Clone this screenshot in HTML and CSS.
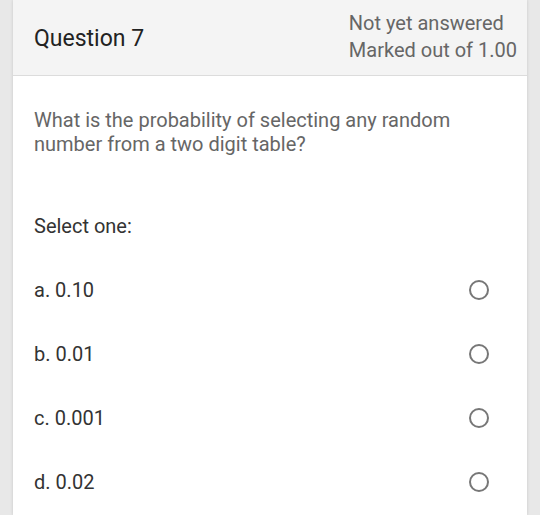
FILE: index.html
```html
<!DOCTYPE html>
<html>
<head>
<meta charset="utf-8">
<link rel="stylesheet" href="styles.css">
</head>
<body>
<div class="card">
  <div class="head">
    <div class="qno">Question 7</div>
    <div class="state">
      <div>Not yet answered</div>
      <div>Marked out of 1.00</div>
    </div>
  </div>
  <div class="body">
    <div class="qtext">What is the probability of selecting any random number from a two digit table?</div>
    <div class="prompt">Select one:</div>
    <div class="answers">
      <div class="opt"><span>a. 0.10</span><span class="radio"></span></div>
      <div class="opt"><span>b. 0.01</span><span class="radio"></span></div>
      <div class="opt"><span>c. 0.001</span><span class="radio"></span></div>
      <div class="opt"><span>d. 0.02</span><span class="radio"></span></div>
    </div>
  </div>
</div>
</body>
</html>
```
FILE: styles.css
```css
html, body { margin: 0; padding: 0; }
body {
  background: #e8e8e8;
  font-family: Roboto, "Noto Sans", sans-serif;
  height: 515px;
  overflow: hidden;
}
.card {
  margin: 0 13px 0 13px;
  background: #fff;
  min-height: 515px;
  box-shadow: 0 0 3px rgba(0,0,0,0.15);
}
.head {
  background: #f4f4f4;
  height: 76px;
  border-bottom: 1px solid #dcdcdc;
  display: flex;
  justify-content: space-between;
  align-items: center;
  padding: 0 10px 0 21px;
  box-sizing: border-box;
}
.qno {
  font-size: 23px;
  color: #222;
  line-height: 28px;
  margin-top: 2px;
}
.state {
  font-size: 20px;
  color: #666;
  line-height: 27px;
  margin-top: -2px;
}
.body {
  padding: 32px 38px 0 21px;
}
.qtext {
  font-size: 20px;
  color: #666;
  line-height: 24px;
}
.prompt {
  font-size: 20px;
  color: #333;
  line-height: 24px;
  margin-top: 58px;
}
.answers { margin-top: 20px; }
.opt {
  display: flex;
  justify-content: space-between;
  align-items: center;
  height: 64px;
  font-size: 20px;
  color: #333;
}
.radio {
  width: 16px;
  height: 16px;
  border: 2.5px solid #777;
  border-radius: 50%;
}
```
